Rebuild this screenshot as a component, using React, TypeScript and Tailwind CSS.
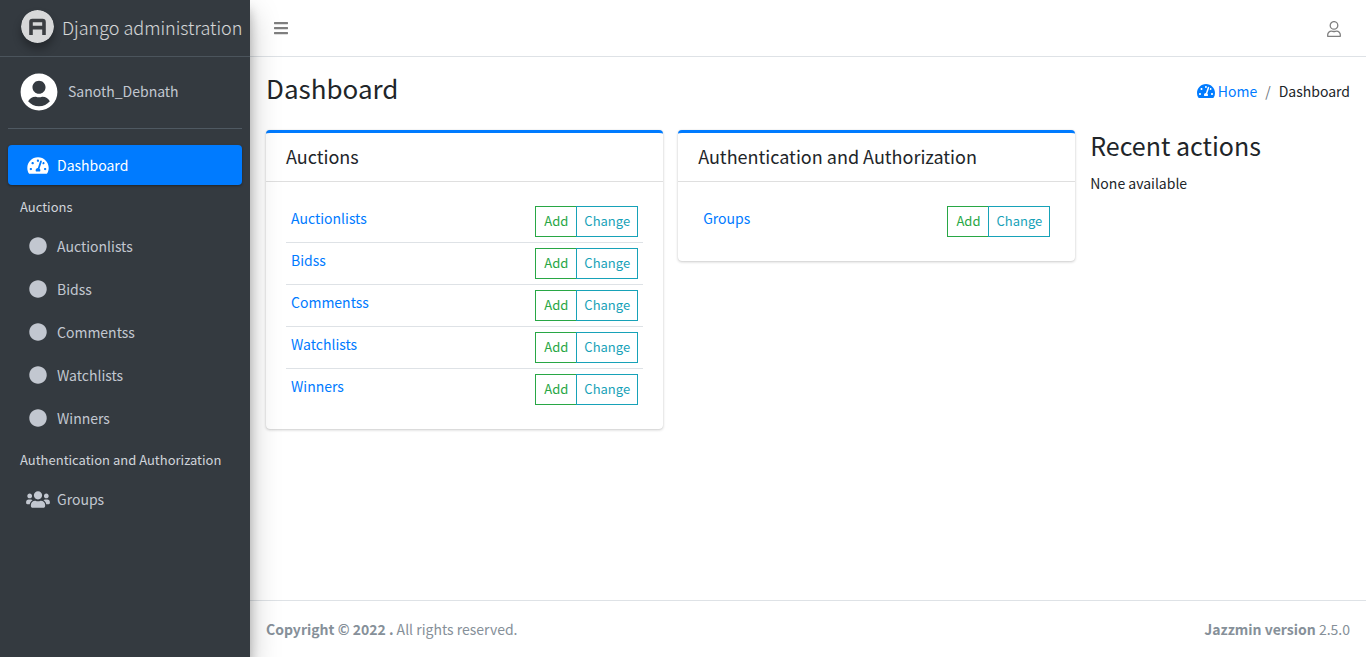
import React from 'react';
import { FaTachometerAlt, FaCircle, FaUsers, FaBars, FaUserCircle } from 'react-icons/fa';

type Model = { name: string };
type AppGroup = { title: string; models: Model[] };

const groups: AppGroup[] = [
  {
    title: 'Auctions',
    models: [
      { name: 'Auctionlists' },
      { name: 'Bidss' },
      { name: 'Commentss' },
      { name: 'Watchlists' },
      { name: 'Winners' },
    ],
  },
  { title: 'Authentication and Authorization', models: [{ name: 'Groups' }] },
];

function GaugeIcon({ className }: { className: string }) {
  return <FaTachometerAlt className={className} aria-hidden="true" />;
}

function UserOutlineIcon() {
  return (
    <svg viewBox="0 0 14 16" className="h-4 w-[14px]" fill="none" stroke="currentColor" strokeWidth="1.3" strokeLinejoin="round" aria-hidden="true">
      <circle cx="7" cy="4.4" r="3.8" />
      <path d="M0.7 15.3v-1.5a3.7 3.7 0 0 1 3.7-3.7c1 0 1.5.4 2.6.4s1.6-.4 2.6-.4a3.7 3.7 0 0 1 3.7 3.7v1.5z" />
    </svg>
  );
}

function BrandLogo() {
  return (
    <svg viewBox="0 0 33 33" className="h-[33px] w-[33px] shrink-0 rounded-full shadow-[0_6px_8px_rgba(0,0,0,0.3)]" aria-hidden="true">
      <circle cx="16.5" cy="16.5" r="16.5" fill="#d7d8d9" />
      <path
        d="M8.2 25V12a3.2 3.2 0 0 1 3.2-3.2h10.2a3.2 3.2 0 0 1 3.2 3.2V25h-3.6v-5.4h-9.4V25zM11.8 15.8h9.4v-3.6h-9.400z"
        fill="#3b3e42"
        fillRule="evenodd"
      />
    </svg>
  );
}

function Sidebar() {
  return (
    <aside className="z-10 flex w-[250px] shrink-0 flex-col bg-[#343a40] text-[#c2c7d0] shadow-[0_14px_28px_rgba(0,0,0,0.25),0_10px_10px_rgba(0,0,0,0.22)]">
      <a href="#" className="flex h-[57px] items-center gap-2 border-b border-[#4b545c] pb-[3px] pl-[21px] text-lg font-light whitespace-nowrap text-white/80">
        <BrandLogo />
        <span>Django administration</span>
      </a>
      <div className="flex grow flex-col px-2">
        <div className="flex h-[72px] items-center gap-[10px] border-b border-[#4f5962] pb-[2px] pl-3">
          <FaUserCircle className="h-[38px] w-[38px] shrink-0 text-white" aria-hidden="true" />
          <a href="#" className="pb-[2px] text-sm font-normal">Sanoth_Debnath</a>
        </div>
        <nav className="mt-4 flex flex-col gap-[3px] text-sm">
          <a href="#" className="flex h-10 items-center gap-[7px] rounded bg-[#007bff] pl-[18px] text-white shadow-[0_1px_3px_rgba(0,0,0,0.12),0_1px_2px_rgba(0,0,0,0.24)]">
            <GaugeIcon className="w-6 text-[19px]" />
            Dashboard
          </a>
          {groups.map((group) => (
            <React.Fragment key={group.title}>
              <div className="flex h-[35px] items-center pt-[3px] pl-3 text-[13px] text-[#d0d4db]">{group.title}</div>
              {group.models.map((model) => (
                <a key={model.name} href="#" className="flex h-10 items-center gap-[7px] pl-[18px]">
                  {model.name === 'Groups' ? (
                    <FaUsers className="w-6 text-[19px]" aria-hidden="true" />
                  ) : (
                    <FaCircle className="w-6 text-lg" aria-hidden="true" />
                  )}
                  {model.name}
                </a>
              ))}
            </React.Fragment>
          ))}
        </nav>
      </div>
    </aside>
  );
}

function AppCard({ group }: { group: AppGroup }) {
  return (
    <section className="col-span-3 rounded border-t-[3px] border-[#007bff] bg-white shadow-[0_0_1px_rgba(0,0,0,0.13),0_1px_3px_rgba(0,0,0,0.2)]">
      <h2 className="border-b border-[#dfdfdf] px-5 pt-[11px] pb-[13px] text-lg leading-6">{group.title}</h2>
      <div className="px-5 py-[19px]">
        <table className="w-full border-collapse">
          <tbody>
            {group.models.map((model) => (
              <tr key={model.name} className="border-b border-[#dee2e6] last:border-b-0">
                <td className="px-[5px] pt-[5px] align-top text-sm leading-6">
                  <a href="#" className="text-[#007bff]">{model.name}</a>
                </td>
                <td className="p-[5px]">
                  <div className="flex justify-end text-[13px] leading-4">
                    <button type="button" className="h-[31px] border border-r-0 border-[#28a745] px-2 pb-px text-[#28a745]">Add</button>
                    <button type="button" className="h-[31px] border border-[#17a2b8] px-[7px] pb-px text-[#17a2b8]">Change</button>
                  </div>
                </td>
              </tr>
            ))}
          </tbody>
        </table>
      </div>
    </section>
  );
}

export default function App() {
  return (
    <div className="flex min-h-screen bg-white font-['Noto_Sans_CJK_SC','Source_Sans_Pro',sans-serif] text-sm text-[#212529]">
      <Sidebar />
      <div className="flex min-w-0 grow flex-col">
        <header className="flex h-[57px] items-center justify-between border-b border-[#dee2e6] px-6 text-black/50">
          <button type="button" aria-label="Toggle sidebar">
            <FaBars className="h-4 w-[14px]" />
          </button>
          <button type="button" aria-label="Account" className="pt-[2px] pr-px">
            <UserOutlineIcon />
          </button>
        </header>
        <main className="grow px-4">
          <div className="flex h-[73px] items-center justify-between pb-[11px]">
            <h1 className="text-[26px] leading-8">Dashboard</h1>
            <nav aria-label="Breadcrumb" className="flex items-center gap-2 pt-[6px]">
              <a href="#" className="flex items-center gap-[3px] text-[#007bff]">
                <GaugeIcon className="text-lg" />
                Home
              </a>
              <span className="text-[#6c757d]">/</span>
              <span>Dashboard</span>
            </nav>
          </div>
          <div className="grid grid-cols-8 items-start gap-[15px]">
            {groups.map((group) => (
              <AppCard key={group.title} group={group} />
            ))}
            <section className="col-span-2">
              <h2 className="mb-[11px] text-[25px] leading-[30px]">Recent actions</h2>
              <p className="leading-6">None available</p>
            </section>
          </div>
        </main>
        <footer className="flex h-[57px] items-center justify-between border-t border-[#dee2e6] px-4 text-[#869099]">
          <p><strong>Copyright © 2022 .</strong> All rights reserved.</p>
          <p><strong>Jazzmin version</strong> 2.5.0</p>
        </footer>
      </div>
    </div>
  );
}
